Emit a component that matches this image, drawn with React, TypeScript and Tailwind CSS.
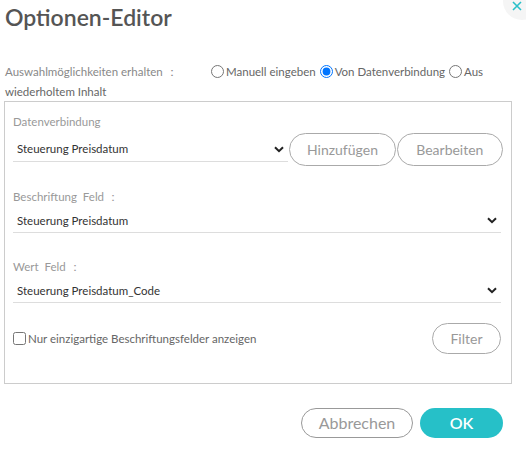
import { useState } from "react";

const font = { fontFamily: '"Lato", "Noto Sans", sans-serif' };

function Chevron() {
  return (
    <svg width="10" height="7" viewBox="0 0 10 7" className="shrink-0">
      <path d="M1 1.2 L5 5.2 L9 1.2" fill="none" stroke="#222" strokeWidth="2" />
    </svg>
  );
}

function SelectLine({ value, className = "" }: { value: string; className?: string }) {
  return (
    <div className={`flex items-center justify-between h-[24px] border-b border-[#ddd] pl-[4px] pr-[4px] ${className}`}>
      <span className="text-[11.5px] text-[#333]">{value}</span>
      <Chevron />
    </div>
  );
}

function Radio({ checked, onClick }: { checked: boolean; onClick: () => void }) {
  return (
    <input
      type="radio"
      checked={checked}
      onChange={onClick}
      className="m-0 mr-[2px] w-[13px] h-[13px] align-[-2px]"
    />
  );
}

export default function App() {
  const [mode, setMode] = useState("data");
  const [unique, setUnique] = useState(false);

  return (
    <div className="relative w-[526px] h-[462px] bg-white overflow-hidden" style={font}>
      {/* close */}
      <div className="absolute left-[503px] top-[-18px] w-[38px] h-[38px] rounded-full bg-[#f5f5f5]" />
      <svg className="absolute left-[512px] top-[1px]" width="10" height="10" viewBox="0 0 10 10">
        <path d="M1 1 L9 9 M9 1 L1 9" stroke="#29c0c9" strokeWidth="1.6" />
      </svg>

      <h1 className="pl-[5px] pt-[2px] text-[23px] leading-[30px] font-semibold text-[#555]">Optionen-Editor</h1>

      {/* Auswahl */}
      <div className="mt-[30px] px-[5px] text-[11.5px] leading-[20px] text-[#888]">
        <div className="flex items-center h-[20px]">
          <span className="w-[206px] shrink-0">Auswahlmöglichkeiten erhalten ：</span>
          <label className="mr-[4px] text-[#666]">
            <Radio checked={mode === "manual"} onClick={() => setMode("manual")} />
            Manuell eingeben
          </label>
          <label className="mr-[4px] text-[#666]">
            <Radio checked={mode === "data"} onClick={() => setMode("data")} />
            Von Datenverbindung
          </label>
          <label className="text-[#666]">
            <Radio checked={mode === "repeat"} onClick={() => setMode("repeat")} />
            Aus
          </label>
        </div>
        <div className="text-[#666]">wiederholtem Inhalt</div>
      </div>

      <div className="mx-[4px] mt-[-1px] w-[508px] h-[283px] border border-[#ccc] px-[8px] pt-[10px]">
        <div className="text-[11.5px] leading-[20px] text-[#999]">Datenverbindung</div>
        <div className="flex items-center mt-[1px]">
          <SelectLine value="Steuerung Preisdatum" className="w-[277px]" />
          <button className="ml-[1px] w-[107px] h-[33px] rounded-full border border-[#aaa] text-[14px] text-[#999]">
            Hinzufügen
          </button>
          <button className="ml-[1px] w-[107px] h-[33px] rounded-full border border-[#aaa] text-[14px] text-[#999]">
            Bearbeiten
          </button>
        </div>

        <div className="mt-[21px] text-[11.5px] leading-[20px] text-[#999]">Beschriftung&nbsp;&nbsp;Feld ：</div>
        <SelectLine value="Steuerung Preisdatum" className="mt-[2px] w-[488px]" />

        <div className="mt-[24px] text-[11.5px] leading-[20px] text-[#999]">Wert&nbsp;&nbsp;Feld ：</div>
        <SelectLine value="Steuerung Preisdatum_Code" className="mt-[2px] w-[488px]" />

        <div className="flex items-center justify-between mt-[20px] w-[488px]">
          <label className="flex items-center text-[11.5px] text-[#666]">
            <input
              type="checkbox"
              checked={unique}
              onChange={() => setUnique(!unique)}
              className="m-0 mr-[2px] w-[13px] h-[13px]"
            />
            Nur einzigartige Beschriftungsfelder anzeigen
          </label>
          <button className="w-[69px] h-[31px] rounded-full border border-[#aaa] text-[14px] text-[#999]">
            Filter
          </button>
        </div>
      </div>

      <div className="flex justify-end gap-[7px] pr-[23px] mt-[24px]">
        <button className="w-[112px] h-[30px] rounded-full border border-[#999] text-[16px] text-[#999]">
          Abbrechen
        </button>
        <button className="w-[83px] h-[30px] rounded-full bg-[#26c0c8] text-[16px] font-semibold text-white">
          OK
        </button>
      </div>
    </div>
  );
}
